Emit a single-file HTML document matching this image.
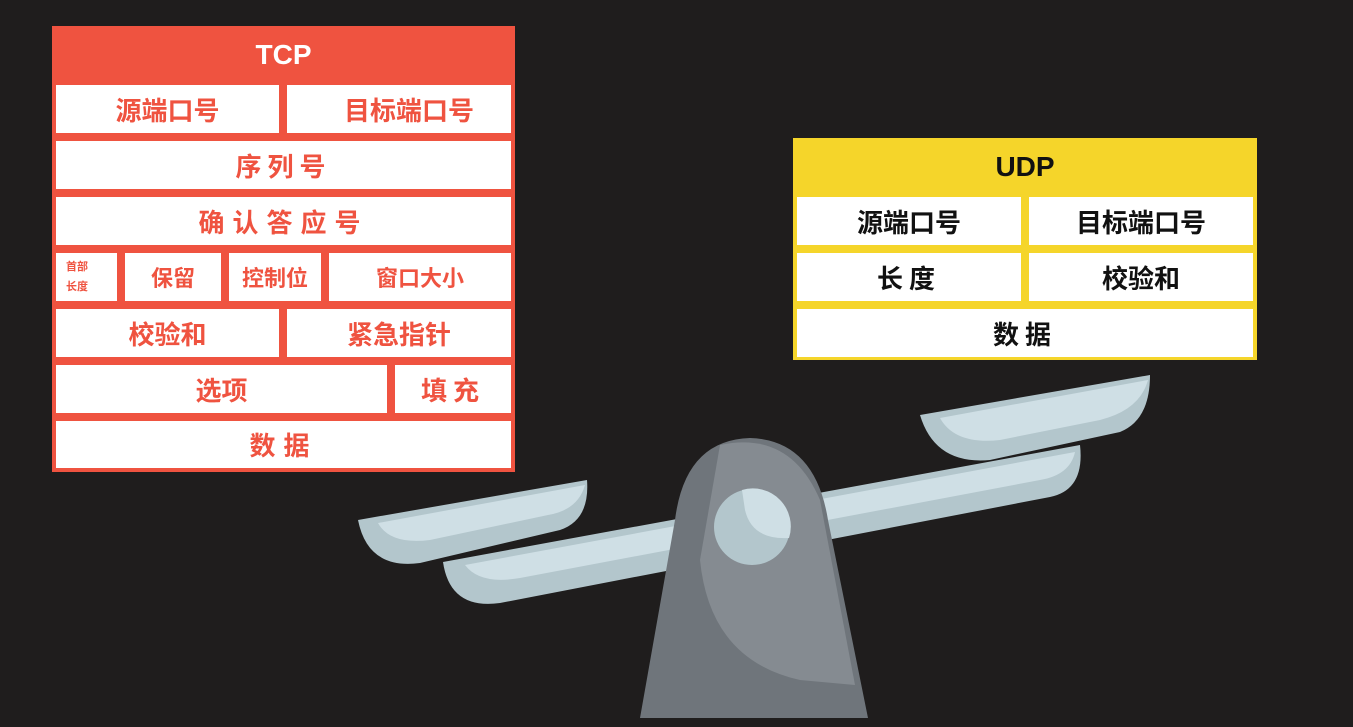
<!DOCTYPE html>
<html><head><meta charset="utf-8"><style>
body{margin:0;width:1353px;height:727px;background:#1f1d1d;position:relative;overflow:hidden;font-family:"Liberation Sans","Noto Sans CJK SC",sans-serif;font-weight:bold}
.box{position:absolute}
.c{position:absolute;background:#fff;display:flex;align-items:center;justify-content:center;font-size:26px;box-sizing:border-box}
.t .c{color:#ef5340}
.u .c{color:#111}
.hd{position:absolute;left:0;right:0;top:0;display:flex;align-items:center;justify-content:center;font-size:28px}
</style></head><body>
<svg width="1353" height="727" style="position:absolute;left:0;top:0">
<path d="M920 415 L1150 375 Q1150 420 1120 432 L990 460 Q935 465 920 415Z" fill="#b3c6cc"/>
<path d="M940 418 L1148 380 Q1140 410 1100 420 L1000 440 Q955 445 940 418Z" fill="#cfdfe5"/>
<path d="M443 562 L1080 445 Q1085 490 1050 497 L500 603 Q450 610 443 562Z" fill="#b3c6cc"/>
<path d="M465 565 L1075 452 Q1070 475 1040 480 L520 578 Q480 585 465 565Z" fill="#cfdfe5"/>
<path d="M358 520 L587 480 Q590 520 560 530 L420 563 Q368 570 358 520Z" fill="#b3c6cc"/>
<path d="M378 523 L585 485 Q578 510 548 515 L430 540 Q390 545 378 523Z" fill="#cfdfe5"/>
<path d="M640 718 L675 520 Q685 440 750 438 Q815 440 828 520 L868 718Z" fill="#6f757b"/>
<path d="M720 445 Q790 430 820 500 L855 685 L800 680 Q710 660 700 560 Z" fill="#858b91"/>
<circle cx="752" cy="527" r="38" fill="#b3c6cc"/>
<path d="M742 490 A38 38 0 0 1 789 538 Q752 540 745 510Z" fill="#cfdfe5"/>
</svg>

<div class="box t" style="left:52px;top:26px;width:463px;height:446px;background:#ef5340">
<div class="hd" style="height:58px;color:#fff">TCP</div>
<div class="c" style="left:4px;top:59px;width:223px;height:48px">源端口号</div>
<div class="c" style="left:235px;top:59px;width:224px;height:48px;padding-left:20px">目标端口号</div>
<div class="c" style="left:4px;top:115px;width:455px;height:48px;letter-spacing:6px">序列号</div>
<div class="c" style="left:4px;top:171px;width:455px;height:48px;letter-spacing:8px">确认答应号</div>
<div class="c" style="left:4px;top:227px;width:61px;height:48px;font-size:11px;line-height:20px;text-align:left;justify-content:flex-start;padding-left:10px">首部<br>长度</div>
<div class="c" style="left:73px;top:227px;width:96px;height:48px;font-size:22px">保留</div>
<div class="c" style="left:177px;top:227px;width:92px;height:48px;font-size:22px">控制位</div>
<div class="c" style="left:277px;top:227px;width:182px;height:48px;font-size:22px">窗口大小</div>
<div class="c" style="left:4px;top:283px;width:223px;height:48px">校验和</div>
<div class="c" style="left:235px;top:283px;width:224px;height:48px">紧急指针</div>
<div class="c" style="left:4px;top:339px;width:331px;height:48px">选项</div>
<div class="c" style="left:343px;top:339px;width:116px;height:48px;letter-spacing:6px">填充</div>
<div class="c" style="left:4px;top:395px;width:455px;height:47px;letter-spacing:8px">数据</div>
</div>

<div class="box u" style="left:793px;top:138px;width:464px;height:222px;background:#f5d52a">
<div class="hd" style="height:58px;color:#111">UDP</div>
<div class="c" style="left:4px;top:59px;width:224px;height:48px">源端口号</div>
<div class="c" style="left:236px;top:59px;width:224px;height:48px">目标端口号</div>
<div class="c" style="left:4px;top:115px;width:224px;height:48px;letter-spacing:6px">长度</div>
<div class="c" style="left:236px;top:115px;width:224px;height:48px">校验和</div>
<div class="c" style="left:4px;top:171px;width:456px;height:48px;letter-spacing:6px">数据</div>
</div>
</body></html>
